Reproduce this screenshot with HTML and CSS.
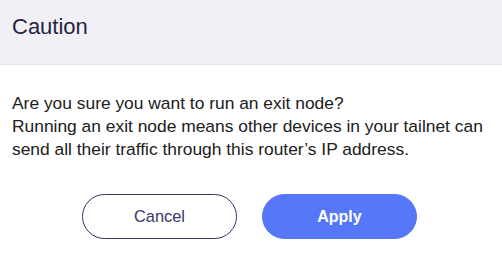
FILE: index.html
```html
<!DOCTYPE html>
<html>
<head>
<meta charset="utf-8">
<link rel="stylesheet" href="styles.css">
</head>
<body>
<div class="dialog">
  <div class="header"><h1 class="title">Caution</h1></div>
  <div class="content">
    <p class="msg">Are you sure you want to run an exit node?<br>Running an exit node means other devices in your tailnet can send all their traffic through this router’s IP address.</p>
    <div class="actions">
      <button class="btn btn-cancel">Cancel</button>
      <button class="btn btn-apply">Apply</button>
    </div>
  </div>
</div>
</body>
</html>
```
FILE: styles.css
```css
html, body { margin: 0; padding: 0; background: #fff; }
body { font-family: "Liberation Sans", Arial, sans-serif; width: 502px; height: 254px; overflow: hidden; }
.dialog { display: flex; flex-direction: column; }
.header {
  height: 65px;
  box-sizing: border-box;
  background: #f1f0f6;
  border-bottom: 1px solid #e4e3ea;
  padding: 13px 12px 0 12px;
}
.title { margin: 0; font-size: 22px; line-height: 28px; font-weight: 400; color: #25253f; }
.content { padding: 27px 12px 0 12px; }
.msg { margin: 0; font-size: 17.4px; line-height: 23px; color: #202020; }
.actions {
  display: flex;
  justify-content: center;
  gap: 25px;
  margin-top: 33px;
  padding-right: 3px;
}
.btn {
  width: 155px;
  height: 45px;
  border-radius: 23px;
  font-family: "Liberation Sans", Arial, sans-serif;
  font-size: 16.4px;
  cursor: pointer;
}
.btn-cancel { background: #fff; border: 1px solid #37376a; color: #37376a; }
.btn-apply { background: #5577f8; border: 1px solid #5577f8; color: #fff; font-weight: 700; font-size: 16px; }
```
